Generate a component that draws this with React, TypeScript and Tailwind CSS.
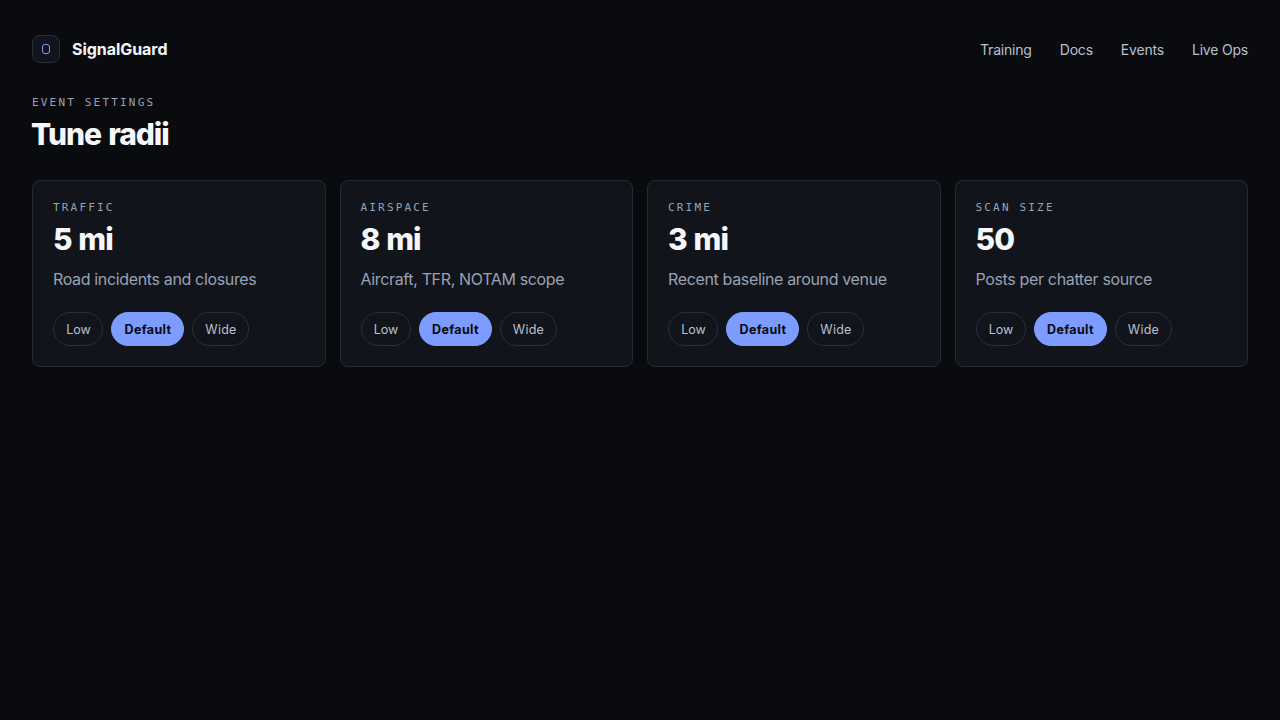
import React from 'react';

const NAV_LINKS = ['Training', 'Docs', 'Events', 'Live Ops'];

const OPTIONS = [
  { name: 'Low', className: 'w-[50px] border-[#292e38] text-[#b9c0ce]' },
  { name: 'Default', className: 'w-[73px] border-[#7c9cff] bg-[#7c9cff] font-bold text-[#090b0f] tracking-[0.35px]' },
  { name: 'Wide', className: 'w-[57px] border-[#292e38] text-[#b9c0ce] tracking-[0.25px]' },
];

const SETTINGS = [
  { label: 'Traffic', value: '5 mi', summary: 'Road incidents and closures' },
  { label: 'Airspace', value: '8 mi', summary: 'Aircraft, TFR, NOTAM scope' },
  { label: 'Crime', value: '3 mi', summary: 'Recent baseline around venue' },
  { label: 'Scan size', value: '50', summary: 'Posts per chatter source' },
];

const Eyebrow: React.FC<{ children: React.ReactNode }> = ({ children }) => (
  <p className="font-['DejaVu_Sans_Mono',monospace] text-[11px] leading-[14px] tracking-[2.18px] uppercase text-[#98a2b3]">
    {children}
  </p>
);

const App: React.FC = () => {
  return (
    <div className="min-h-screen bg-[#090b0f] px-8 pt-[35px] font-['Inter',sans-serif] text-[#f5f7fb]">

      {/* Header */}
      <header className="flex h-7 items-center justify-between">
        <div className="flex items-center gap-3">
          <span className="flex size-7 items-center justify-center rounded-lg border border-[#292e38] bg-[#11141b]">
            <span className="h-[10px] w-2 rounded-[3px] border border-[#7c9cff]" />
          </span>
          <span className="text-base font-bold tracking-[-0.05px]">SignalGuard</span>
        </div>
        <nav className="flex gap-7 pt-0.5 text-sm tracking-[-0.2px] text-[#b9c0ce]">
          {NAV_LINKS.map(link => (
            <a key={link} href="#">{link}</a>
          ))}
        </nav>
      </header>

      <main className="pt-[33px]">
        <Eyebrow>Event settings</Eyebrow>
        <h1 className="-ml-px mt-[7px] text-[30px] leading-[34px] font-extrabold tracking-[-1.1px] [word-spacing:2px]">Tune radii</h1>

        {/* Radius cards */}
        <div className="mt-[29px] grid grid-cols-4 gap-[14px]">
          {SETTINGS.map(setting => (
            <section key={setting.label} className="h-[187px] rounded-lg border border-[#242a35] bg-[#11141b] p-5">
              <Eyebrow>{setting.label}</Eyebrow>
              <h2 className="mt-[7px] text-[30px] leading-[34px] font-extrabold tracking-[-0.9px] [word-spacing:1px]">{setting.value}</h2>
              <p className="mt-[11px] text-base tracking-[-0.35px] text-[#98a2b3]">{setting.summary}</p>
              <div className="mt-[21px] flex gap-2 text-[12.5px]">
                {OPTIONS.map(option => (
                  <button key={option.name} className={`h-[34px] rounded-full border pt-[3px] pl-px ${option.className}`}>
                    {option.name}
                  </button>
                ))}
              </div>
            </section>
          ))}
        </div>
      </main>
    </div>
  );
};

export default App;
